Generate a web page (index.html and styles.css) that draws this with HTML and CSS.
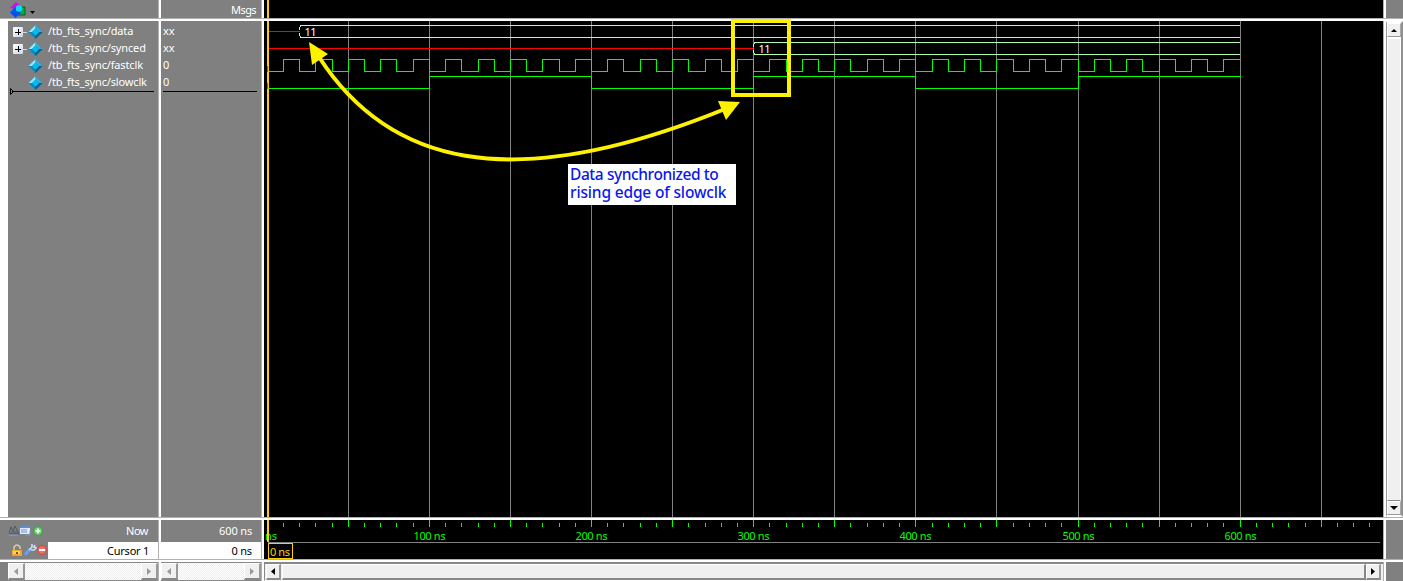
FILE: index.html
```html
<!DOCTYPE html>
<html lang="en">
<head>
<meta charset="utf-8">
<title>Wave</title>
<link rel="stylesheet" href="styles.css">
</head>
<body>
<svg width="0" height="0" class="defs">
  <symbol id="signal" viewBox="0 0 16 16">
    <path d="M8.500 1 15.500 8 8.500 15 1.500 8Z" fill="#0789c2"/>
    <path d="M8.500 1 1.500 8 5 8 8.500 4.500Z" fill="#9ae5fb"/>
    <path d="M8.500 1 15.500 8 12 8 8.500 4.500Z" fill="#35aed8"/>
    <path d="M15.500 8 8.500 15 8.500 11.500 12 8Z" fill="#065e8b"/>
    <path d="M8.500 4.500 12 8 8.500 11.500 5 8Z" fill="#00bff0"/>
  </symbol>
</svg>
<main class="wave-window">
  <header class="cell tools">
    <svg class="shapes" width="17" height="17" viewBox="0 0 17 17">
      <path d="M0 7 6 1 11 5 5 8Z" fill="#c514e6"/>
      <path d="M8 6h7v8H8z" fill="#0aab45" stroke="#056025"/>
      <path d="M5.500 6 11 11.500 5.500 17 0 11.500Z" fill="#0751e8"/>
      <circle cx="9" cy="7.500" r="3.200" fill="#08dcff"/>
    </svg>
    <svg class="caret" width="5" height="3"><path d="M0 0h5L2.500 3Z"/></svg>
  </header>
  <div class="split-v r1"></div>
  <header class="cell msgs-head">Msgs</header>
  <div class="split-v r1"></div>
  <div class="black"><svg width="1119" height="18"><path d="M3 0h2v18h-2z" fill="#ffd000"/></svg></div>
  <div class="split-v r1"></div>
  <div class="cell"></div>
  <div class="split-h"></div>

  <section class="names">
    <div class="signals">
      <div class="row"><i class="plus"></i><i class="link"></i><svg class="gem"><use href="#signal"/></svg><span>/tb_fts_sync/data</span></div>
      <div class="row"><i class="plus"></i><i class="link"></i><svg class="gem"><use href="#signal"/></svg><span>/tb_fts_sync/synced</span></div>
      <div class="row leaf"><svg class="gem"><use href="#signal"/></svg><span>/tb_fts_sync/fastclk</span></div>
      <div class="row leaf"><svg class="gem"><use href="#signal"/></svg><span>/tb_fts_sync/slowclk</span></div>
      <svg class="insert" width="146" height="7"><path d="M.5 .500v6L3.500 3.500Z" fill="none" stroke="#000"/><path d="M2 3h142v1H2z"/></svg>
    </div>
  </section>
  <div class="split-v"></div>
  <section class="values">
    <div class="row">xx</div><div class="row">xx</div><div class="row">0</div><div class="row">0</div>
    <div class="end-line"></div>
  </section>
  <div class="split-v"></div>
  <section class="black plot">
    <svg id="plot" width="1119" height="496" viewBox="264 21 1119 496"></svg>
    <svg class="marks" width="500" height="150" viewBox="300 18 500 150">
      <path d="M319 57C387 162 506 198 725 109" fill="none" stroke="#fff200" stroke-width="4"/>
      <path d="M309 42 328 54 312 65ZM740 102 718 101 726 120Z" fill="#fff200"/>
      <rect x="733" y="21" width="56" height="74" fill="none" stroke="#fff200" stroke-width="4"/>
    </svg>
    <p class="note"><span class="n1">Data synchronized to</span><br><span class="n2">rising edge of slowclk</span></p>
  </section>
  <div class="split-v"></div>
  <aside class="vscroll"><div class="btn"><svg width="6" height="3"><path d="M0 3 3 0 6 3Z"/></svg></div><div class="thumb"></div><div class="btn"><svg width="8" height="4"><path d="M0 0h8L4 4Z"/></svg></div></aside>
  <div class="split-h"></div>

  <section class="footer-names">
    <div class="now">
      <svg width="36" height="14" viewBox="0 0 36 14">
        <path d="M1 9 3 3l2 4 2-5 4 8H1M1 10h9M3 8h6" fill="none" stroke="#4f5965"/>
        <path d="M1 11h9" stroke="#86abd5"/>
        <path d="M12 2h10v8H12z" fill="#dceaff"/><path d="M12 2h10v2H12z" fill="#608ecb"/><path d="M13 6h6m-6 2h6M17 11h5V7" fill="none" stroke="#7796c8"/>
        <circle cx="30" cy="7" r="5" fill="#42a348"/><circle cx="30" cy="7" r="3.800" fill="#70c974"/><path d="M30 4.500v5M27.500 7h5" stroke="#fff" stroke-width="1.600"/>
      </svg><span>Now</span>
    </div>
    <div class="cursor">
      <div class="cursor-icons"><svg width="40" height="17" viewBox="0 0 40 17">
        <path d="M6 8V5q3-4 6 0v2" fill="none" stroke="#d8ccb0" stroke-width="1.500"/><path d="M4 8h10v6H4z" fill="#eaa52c"/><path d="M5 9h7v3H5z" fill="#ffcf68"/><path d="M8 10h2v2H8z" fill="#7d561b"/>
        <path d="m17 13 5-6" stroke="#6a9ee9" stroke-width="3"/><path d="m21 8 3-3V2m3 1-1 2 2 1-2 2h-3" fill="none" stroke="#c8def5" stroke-width="1.700"/>
        <circle cx="34" cy="8" r="5" fill="#d54845"/><circle cx="34" cy="8" r="3.800" fill="#ee7168"/><path d="M31 8h6" stroke="#fff" stroke-width="2"/>
      </svg></div><span>Cursor 1</span>
    </div>
  </section>
  <div class="split-v"></div>
  <section class="footer-values"><div>600 ns</div><div class="white">0 ns</div></section>
  <div class="split-v"></div>
  <section class="black"><svg id="ruler" width="1119" height="39" viewBox="264 520 1119 39"></svg></section>
  <div class="split-v"></div>
  <div class="cell"></div>
  <div class="split-h"></div>

  <div class="pad"><div class="hscroll idle"><div class="btn"><svg width="4" height="7"><path d="M4 0v7L0 3.500Z"/></svg></div><div class="track"></div><div class="btn"><svg width="4" height="7"><path d="M0 0v7L4 3.500Z"/></svg></div></div></div>
  <div class="split-v"></div>
  <div class="hscroll idle"><div class="btn"><svg width="4" height="7"><path d="M4 0v7L0 3.500Z"/></svg></div><div class="track"></div><div class="btn"><svg width="4" height="7"><path d="M0 0v7L4 3.500Z"/></svg></div></div>
  <div class="split-v"></div>
  <div class="hscroll main-scroll"><div class="btn"><svg width="4" height="7"><path d="M4 0v7L0 3.500Z"/></svg></div><div class="thumb"></div><div class="btn"><svg width="4" height="7"><path d="M0 0v7L4 3.500Z"/></svg></div></div>
  <div class="split-v"></div>
  <div class="cell"></div>
</main>
<script src="wave.js"></script>
</body>
</html>
```

FILE: styles.css
```css
* { box-sizing: border-box; }
body { margin: 0; overflow: hidden; font: 11px/17px "Noto Sans", sans-serif; color: #fff; background: #808080; }
svg { display: block; flex: none; }
.defs { position: absolute; }
.wave-window { width: 1403px; height: 581px; display: grid; grid-template-columns: 158px 3px 100px 3px 1119px 3px 17px; grid-template-rows: 18px 3px 496px 3px 39px 3px 19px; }
.wave-window > * { min-width: 0; min-height: 0; }
.cell, .values, .footer-values { background: #808080; }
.black { background: #000; }
.split-v { background: linear-gradient(90deg, #b0b0b0 1px, #fff 1px); }
.split-h { grid-column: 1 / -1; background: linear-gradient(#b0b0b0 1px, #fff 1px); }
.tools { display: flex; padding: 1px 0 0 10px; }
.caret { margin: 10px 0 0 3px; }
.msgs-head { text-align: right; padding: 1px 5px 0 0; letter-spacing: -0.6px; }
.names { background: #fff; padding-left: 8px; }
.signals { height: 100%; background: #808080; padding: 2px 0 0 2px; }
.row { height: 17px; line-height: 15px; display: flex; align-items: center; white-space: nowrap; }
.names .row { padding-left: 3px; }
.names .leaf { padding-left: 17px; }
.plus { width: 10px; height: 10px; margin-top: 1px; border-radius: 1px; background: linear-gradient(#000, #000) 2px 4.500px / 6px 1px no-repeat, linear-gradient(#000, #000) 4.500px 2px / 1px 6px no-repeat, linear-gradient(135deg, #fff, #cdd5e6); }
.link { width: 4px; height: 1px; margin-top: 2px; background: #d8d8d8; }
.gem { width: 16px; height: 16px; }
.names span { margin: 0 0 2px 5px; letter-spacing: -0.15px; }
.insert { margin-top: -3px; }
.values { padding: 2px 0 0 2px; }
.values .row { padding-bottom: 2px; }
.end-line { width: 94px; height: 1px; background: #000; }
.plot { position: relative; overflow: visible; }
.marks { position: absolute; left: 36px; top: -3px; }
.note { position: absolute; left: 304px; top: 143px; width: 168px; height: 41px; margin: 0; padding: 1px 0 0 2px; background: #fff; color: #0b18ed; font: 500 15.5px/18px "Noto Sans", sans-serif; white-space: nowrap; }
.n1 { letter-spacing: -0.42px; }
.n2 { letter-spacing: -0.16px; }
.vscroll { background: #f0f0f0; border: 2px solid #fff; border-right-color: #909090; border-left: 1px solid #999; display: flex; flex-direction: column; }
.vscroll .btn { height: 14px; display: flex; align-items: center; justify-content: center; border: 1px solid #fff; border-right-color: #aaa; border-bottom-color: #999; }
.vscroll .thumb { flex: 1; border: 1px solid #fff; border-top: 2px solid #fff; border-bottom-color: #888; }
.footer-names { background: #808080; }
.now { height: 22px; display: flex; justify-content: space-between; align-items: center; padding: 0 10px 0 8px; }
.now span { margin-bottom: 1px; letter-spacing: -0.5px; }
.cursor { height: 17px; display: flex; justify-content: space-between; background: #fff; color: #000; padding-right: 9px; line-height: 18px; letter-spacing: -0.25px; }
.cursor-icons { width: 48px; background: #808080; padding-left: 8px; height: 17px; }
.footer-values { text-align: right; line-height: 22px; letter-spacing: -0.15px; }
.footer-values div { height: 22px; padding-right: 9px; }
.footer-values .white { height: 17px; line-height: 18px; color: #000; background: #fff; }
.pad { background: #808080; padding-left: 8px; height: 19px; }
.hscroll { height: 19px; display: flex; background: #f0f0f0; }
.hscroll .btn { width: 17px; display: flex; justify-content: center; align-items: center; background: #f0f0f0; border: 1px solid #fff; border-right: 2px solid #999; border-bottom: 2px solid #888; }
.idle { border-top: 1px solid #888; border-bottom: 1px solid #888; }
.idle .btn { fill: #999; padding-right: 1px; }
.track { flex: 1; background: repeating-conic-gradient(#fff 0 25%, #eee 0 50%) 0 0 / 2px 2px; }
.main-scroll { border-top: 2px solid #888; border-bottom: 1px solid #fff; padding: 0 0 0 1px; border-left: 1px solid #888; }
.main-scroll .btn { width: 15px; }
.main-scroll .btn:last-child { margin-right: 2px; }
.main-scroll .thumb { flex: 1; margin-left: 1px; border: 1px solid #fff; border-right: 2px solid #888; border-bottom: 2px solid #888; }
#plot path, #ruler path { shape-rendering: crispEdges; }
#plot text, #ruler text { font: 11px "Noto Sans", sans-serif; }
```

FILE: wave.js
```js
const NS = "http://www.w3.org/2000/svg";
const plot = document.getElementById("plot");
const ruler = document.getElementById("ruler");
const xAt = ns => Math.floor(267.2 + ns * 1.6216) + 0.5;

function path(parent, d, color, width = 1) {
  const p = document.createElementNS(NS, "path");
  p.setAttribute("d", d);
  p.setAttribute("fill", "none");
  p.setAttribute("stroke", color);
  p.setAttribute("stroke-width", width);
  parent.append(p);
}
function label(parent, text, x, y, color, length) {
  const t = document.createElementNS(NS, "text");
  t.textContent = text;
  t.setAttribute("x", x);
  t.setAttribute("y", y);
  t.setAttribute("fill", color);
  t.setAttribute("textLength", length);
  parent.append(t);
}
function clock(half, firstHigh, top) {
  let d = `M267.5 ${top + 12.5}`;
  for (let t = half, high = firstHigh; t <= 600; t += half, high = !high) {
    d += `H${xAt(t)}`;
    if (t < 600) d += `V${high ? top + 0.5 : top + 12.5}`;
  }
  path(plot, d, "#00ff00");
}
function bus(ns, top) {
  const x = xAt(ns);
  path(plot, `M${x + 1} ${top + 0.5}H1240M${x + 1} ${top + 12.5}H1240M${x + 1} ${top}V${top + 2}M${x} ${top + 2}V${top + 5}M${x} ${top + 8}V${top + 11}M${x + 1} ${top + 11}V${top + 13}`, "#b0ffb0");
  label(plot, "11", x + 5, top + 11, "#fff", 12);
}

for (let t = 50; t <= 650; t += 50) path(plot, `M${xAt(t)} 21V517`, "#808080");
path(plot, "M268 31.5H300M268 48.5H753", "#ff0000");
bus(20, 25);
bus(300, 42);
clock(10, true, 59);
clock(100, true, 76);
path(plot, "M268 21V517", "#ffd000", 2);
path(plot, "M267.5 66V72M267.5 83V89", "#ff3000");

for (let t = 10; t <= 680; t += 10) {
  path(ruler, `M${xAt(t)} ${t % 50 ? 523 : 520}V527`, "#00ff00");
}
label(ruler, "ns", 265, 540, "#00ff00", 12);
for (let t = 100; t <= 600; t += 100) label(ruler, `${t} ns`, xAt(t) - 16, 540, "#00ff00", 32);
path(ruler, "M268 542.5H1380", "#808080");
path(ruler, "M268 520V542", "#ffd000", 2);
path(ruler, "M268.5 543.5H292.5V558.5H268.5Z", "#ffd000");
label(ruler, "0 ns", 270, 556, "#ffd000", 20);
```
